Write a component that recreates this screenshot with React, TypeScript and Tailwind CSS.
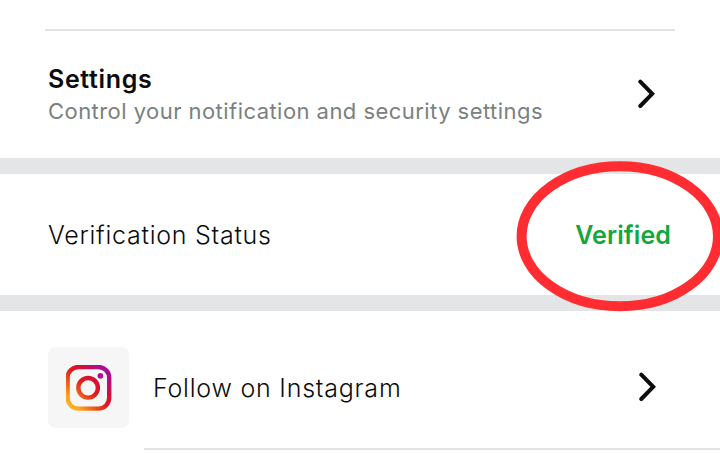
function Chevron() {
  return (
    <svg className="h-[30px] w-[18px] shrink-0" viewBox="0 0 18 30" fill="none" stroke="#0b0c0c" strokeWidth="4" strokeLinecap="round" strokeLinejoin="miter">
      <path d="M2.3 2.7 14.2 14.8 2.3 27" />
    </svg>
  );
}

function InstagramLogo() {
  return (
    <svg className="h-[46px] w-[46px]" viewBox="0 0 46 46" fill="none">
      <defs>
        <linearGradient id="base" x1="0" y1="46" x2="46" y2="0" gradientUnits="userSpaceOnUse">
          <stop offset="0" stopColor="#ffc52e" />
          <stop offset="0.18" stopColor="#fba21f" />
          <stop offset="0.36" stopColor="#ee4b1a" />
          <stop offset="0.5" stopColor="#df1a1e" />
          <stop offset="0.65" stopColor="#d50f3a" />
          <stop offset="0.8" stopColor="#b60c83" />
          <stop offset="1" stopColor="#9610ad" />
        </linearGradient>
      </defs>
      <g stroke="url(#base)" strokeWidth="4.4">
        <rect x="1.6" y="2" width="41.6" height="41.6" rx="10.8" />
        <circle cx="22.1" cy="22.8" r="9.8" />
      </g>
      <circle cx="34.4" cy="10.8" r="2.9" fill="#b1138d" />
    </svg>
  );
}

export default function App() {
  return (
    <main className="relative flex h-[454px] w-[720px] flex-col overflow-hidden bg-white font-['Inter',sans-serif] text-[#0b0c0c]">
      <section className="flex h-[158px] shrink-0 flex-col pt-[29px]">
        <hr className="ml-[45px] h-[2px] w-[630px] border-0 bg-[#e4e4e4]" />
        <div className="flex items-start justify-between pt-[32px] pr-[64px] pl-[48px]">
          <div>
            <h2 className="text-[25px] leading-[32px] font-semibold tracking-[0.65px] whitespace-nowrap">Settings</h2>
            <p className="text-[22px] leading-[32px] font-normal tracking-[0.45px] whitespace-nowrap text-[#7a8180]">
              Control your notification and security settings
            </p>
          </div>
          <div className="pt-[16px]">
            <Chevron />
          </div>
        </div>
      </section>
      <div className="h-4 shrink-0 bg-[#e3e5e7]" />
      <section className="flex h-[121px] shrink-0 items-center justify-between pr-[49px] pl-[48px]">
        <span className="text-[25px] leading-[32px] font-light tracking-[0.74px] whitespace-nowrap">Verification Status</span>
        <span className="text-[25px] leading-[32px] font-semibold tracking-[0.1px] whitespace-nowrap text-[#14a73c]">Verified</span>
      </section>
      <div className="h-4 shrink-0 bg-[#e3e5e7]" />
      <section className="flex h-[137px] shrink-0 items-start pt-[36px] pr-[63px] pl-[48px]">
        <div className="flex h-[81px] w-[81px] items-center justify-center rounded-lg bg-[#f6f6f6]">
          <InstagramLogo />
        </div>
        <div className="flex flex-1 items-start justify-between pl-[24px]">
          <span className="pt-[25px] text-[25px] leading-[32px] font-light tracking-[0.78px] whitespace-nowrap">Follow on Instagram</span>
          <div className="pt-[25px]">
            <Chevron />
          </div>
        </div>
      </section>
      <hr className="ml-[144px] h-[2px] border-0 bg-[#e4e4e4]" />
      <svg className="pointer-events-none absolute inset-0 h-[454px] w-[720px]" viewBox="0 0 720 454" fill="none">
        <ellipse cx="619.8" cy="236.3" rx="98.2" ry="70" stroke="#ff2d31" strokeWidth="10" />
      </svg>
    </main>
  );
}
